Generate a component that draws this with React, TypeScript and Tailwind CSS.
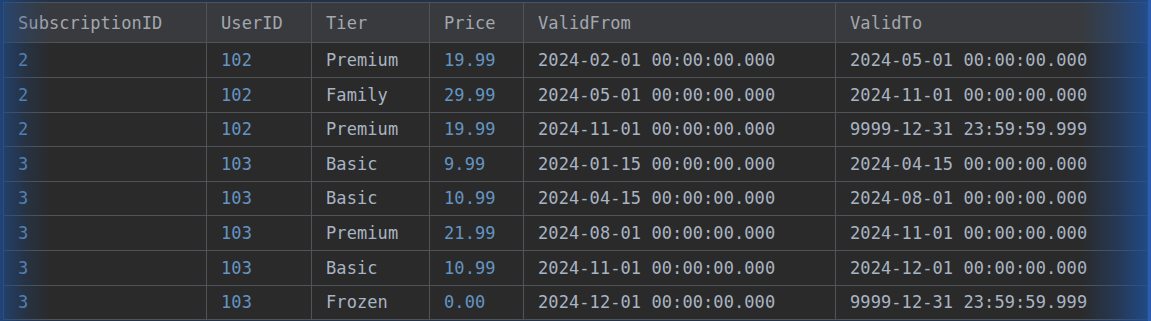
import React from "react";

const headers = ["SubscriptionID", "UserID", "Tier", "Price", "ValidFrom", "ValidTo"];

const rows: [string, string, string, string, string, string][] = [
  ["2", "102", "Premium", "19.99", "2024-02-01 00:00:00.000", "2024-05-01 00:00:00.000"],
  ["2", "102", "Family", "29.99", "2024-05-01 00:00:00.000", "2024-11-01 00:00:00.000"],
  ["2", "102", "Premium", "19.99", "2024-11-01 00:00:00.000", "9999-12-31 23:59:59.999"],
  ["3", "103", "Basic", "9.99", "2024-01-15 00:00:00.000", "2024-04-15 00:00:00.000"],
  ["3", "103", "Basic", "10.99", "2024-04-15 00:00:00.000", "2024-08-01 00:00:00.000"],
  ["3", "103", "Premium", "21.99", "2024-08-01 00:00:00.000", "2024-11-01 00:00:00.000"],
  ["3", "103", "Basic", "10.99", "2024-11-01 00:00:00.000", "2024-12-01 00:00:00.000"],
  ["3", "103", "Frozen", "0.00", "2024-12-01 00:00:00.000", "9999-12-31 23:59:59.999"],
];

const rowHeights = ["h-[35px]", "h-[35px]", "h-[34px]", "h-[35px]", "h-[34px]", "h-[35px]", "h-[35px]", "h-[34px]"];
const colWidths = ["w-[203px]", "w-[105px]", "w-[118px]", "w-[94px]", "w-[312px]", "w-[312px]"];
const numericCols = [0, 1, 3];

export default function App() {
  return (
    <div
      className="relative w-[1151px] h-[321px] overflow-hidden bg-[#243247] pt-[2px] pl-[3px]"
      style={{ fontFamily: '"DejaVu Sans Mono", "Liberation Mono", monospace' }}
    >
      <div className="flex flex-col w-[1145px] border-t border-l border-[#505357] text-[17px] leading-none tracking-[0.08px]">
        <div className="flex h-[40px] bg-[#383a3e]">
          {headers.map((h, i) => (
            <div
              key={h}
              className={`${colWidths[i]} shrink-0 flex items-center pl-[14px] pt-[2px] border-r border-b border-[#505357] text-[#a3a7ae]`}
            >
              {h}
            </div>
          ))}
        </div>
        {rows.map((r, ri) => (
          <div key={ri} className={`flex ${rowHeights[ri]} bg-[#2a2a2a]`}>
            {r.map((c, ci) => (
              <div
                key={ci}
                className={`${colWidths[ci]} shrink-0 flex items-center pl-[14px] border-r border-b border-[#505357] ${
                  numericCols.includes(ci) ? "text-[#6494c2]" : "text-[#a9b4c2]"
                }`}
              >
                {c}
              </div>
            ))}
          </div>
        ))}
      </div>
      <div className="pointer-events-none absolute inset-y-0 left-0 w-[50px] bg-gradient-to-r from-[#1d4c8eb3] via-[#1d4c8e40] to-transparent" />
      <div className="pointer-events-none absolute inset-y-0 right-0 w-[70px] bg-gradient-to-l from-[#1f4f96e6] via-[#1f4f9660] to-transparent" />
      <div className="pointer-events-none absolute inset-y-0 right-0 w-[3px] bg-[#2a5cb0]" />
    </div>
  );
}
